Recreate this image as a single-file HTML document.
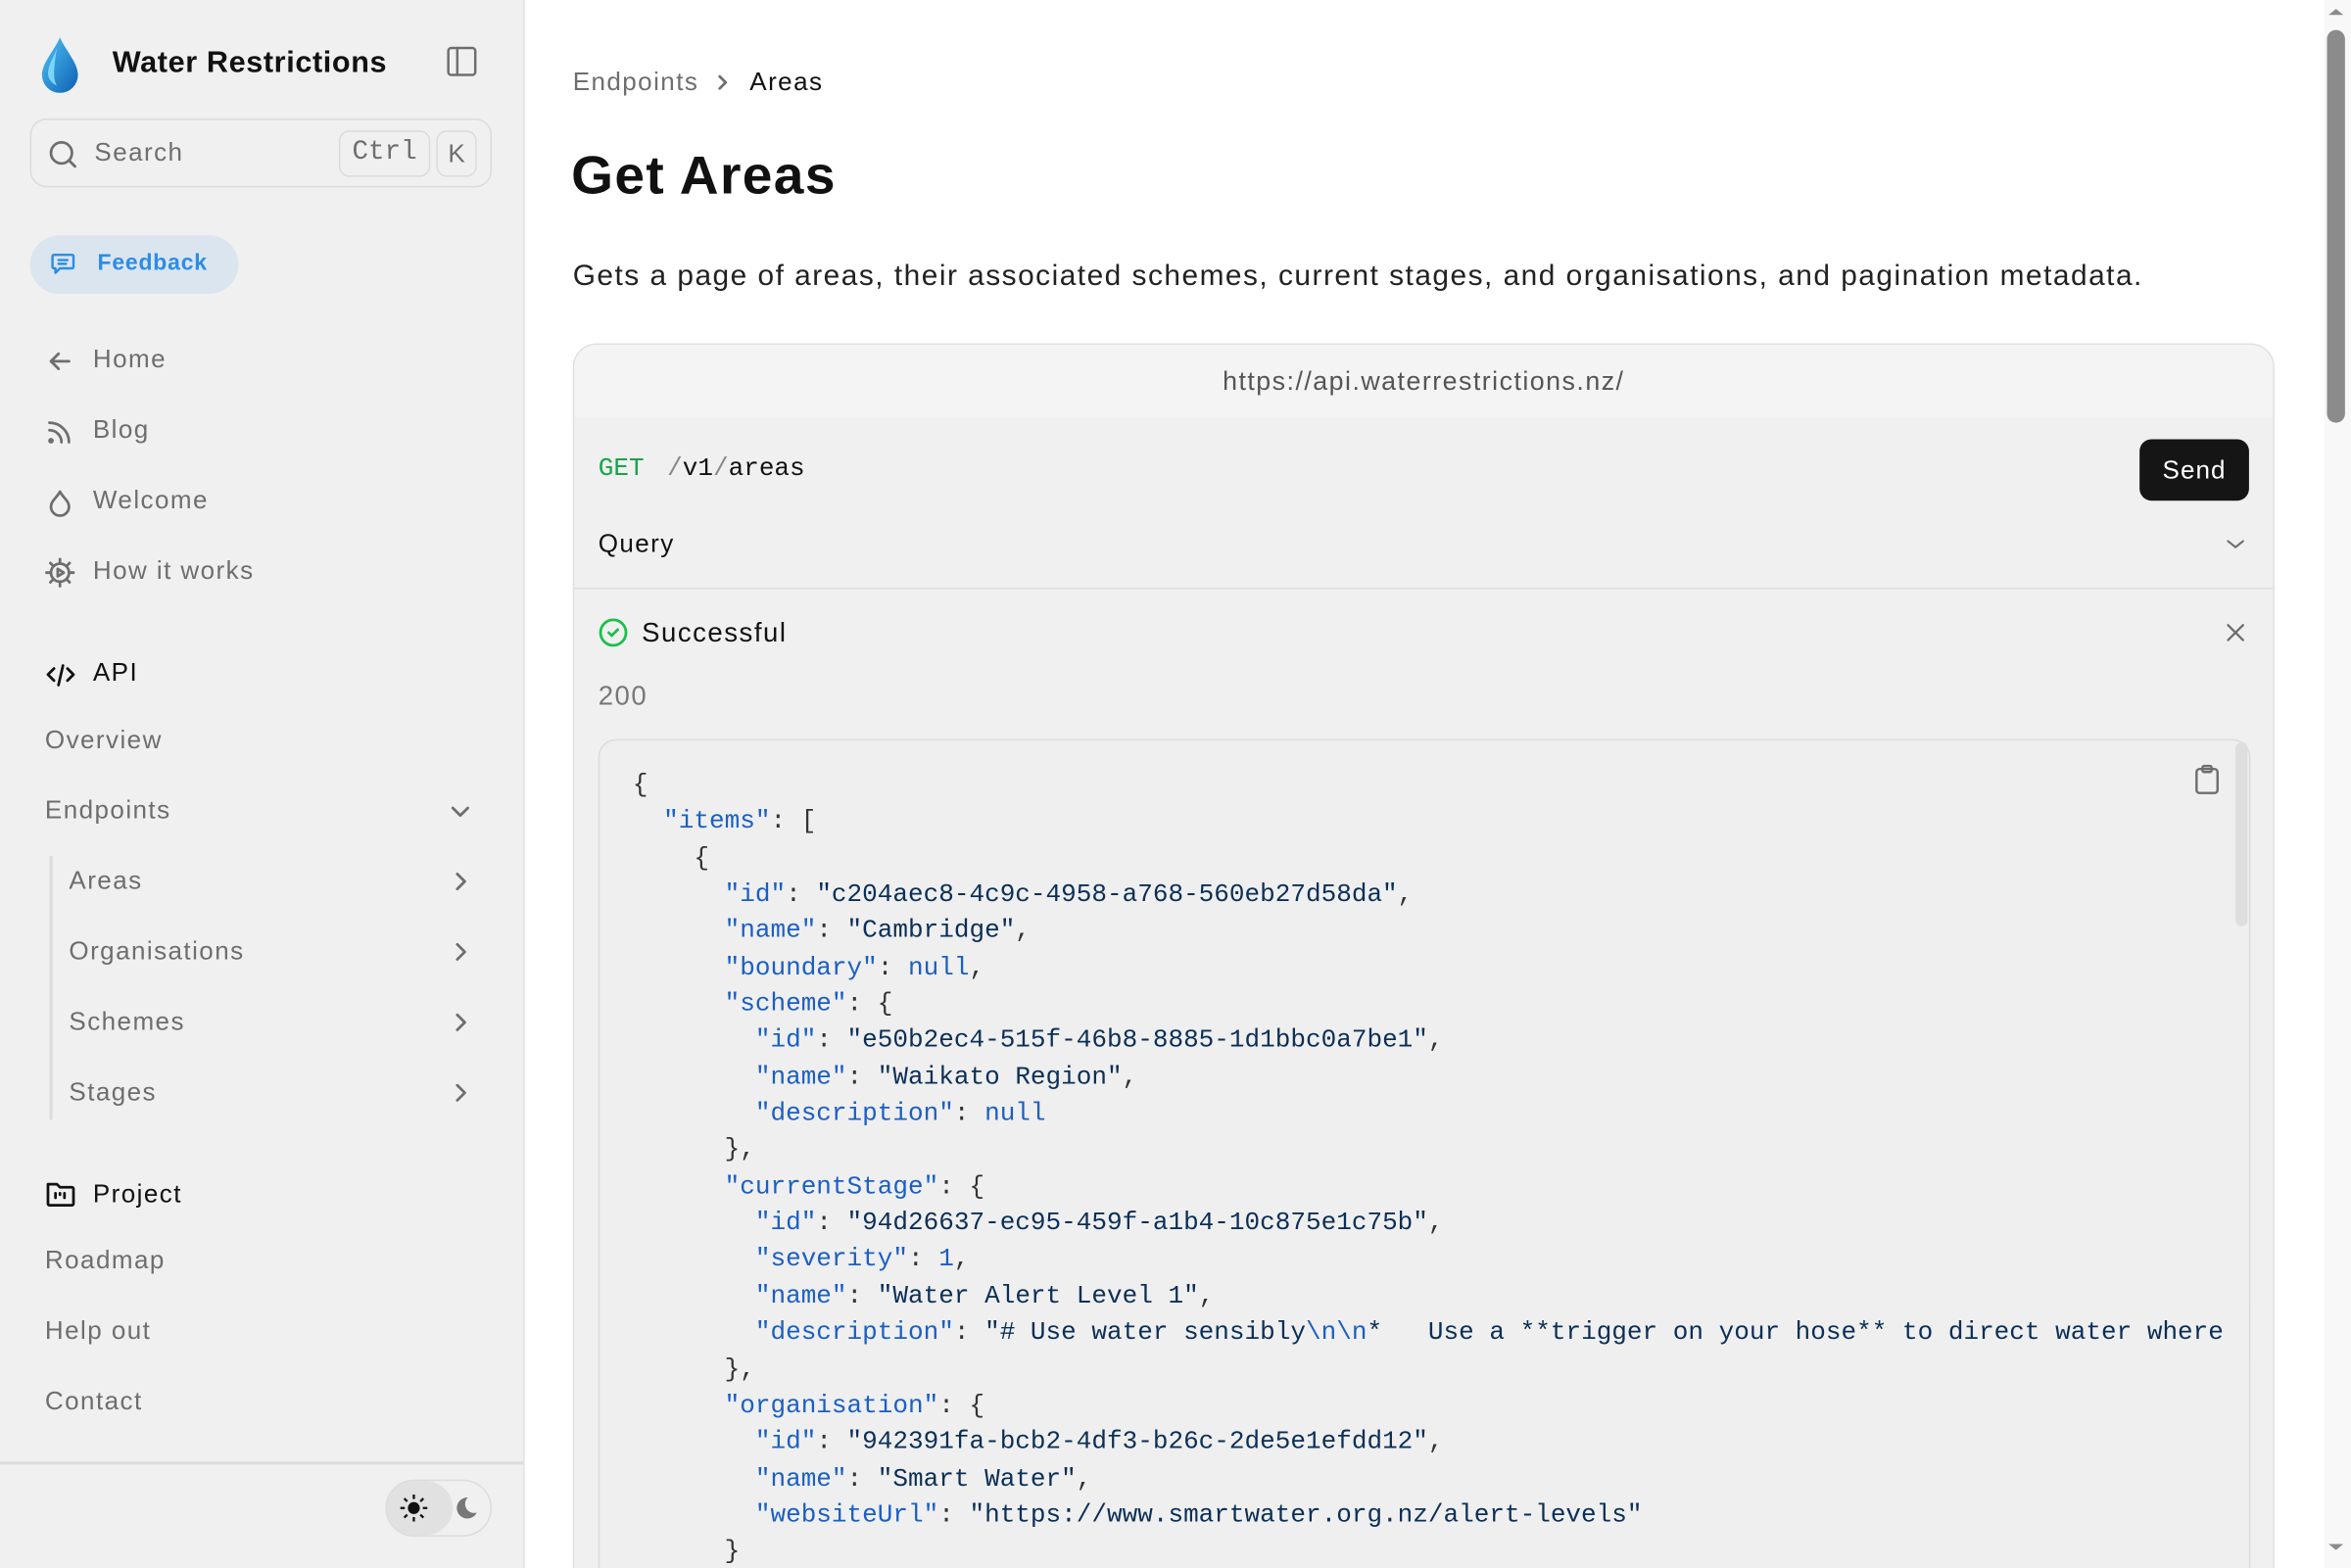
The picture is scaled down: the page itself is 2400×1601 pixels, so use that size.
<!DOCTYPE html>
<html><head><meta charset="utf-8"><style>
*{box-sizing:border-box;margin:0;padding:0}
html,body{width:2400px;height:1600px;overflow:hidden;background:#fff}
#w{position:absolute;left:0;top:0;width:1568px;height:1046px;overflow:hidden;transform:scale(1.5306);transform-origin:0 0;background:#fff;font-family:"Liberation Sans",sans-serif;color:#111}
.sb{position:absolute;left:0;top:0;width:350px;height:1046px;background:#f0f0f0;border-right:1px solid #e3e3e3}
.abs{position:absolute}
.t{position:absolute;font-size:17px;line-height:20px;color:#6e6e6e;white-space:nowrap;letter-spacing:.055em}
.ic{position:absolute;fill:none;stroke:#6e6e6e;stroke-width:1.8;stroke-linecap:round;stroke-linejoin:round}
pre{position:absolute;left:422px;top:513px;font-family:"Liberation Mono",monospace;font-size:17px;line-height:24.35px;color:#333}
.k{color:#1a5fc4}.s{color:#0b2f57}.n{color:#1a5fc4}
</style></head><body><div id="w">
<div class="sb">
 <svg class="abs" style="left:26px;top:24px" width="28" height="38" viewBox="0 0 28 38"><defs><linearGradient id="g" x1="0" y1="0" x2="1" y2="1"><stop offset="0" stop-color="#4fc3f7"/><stop offset="1" stop-color="#0d5fb0"/></linearGradient></defs><path d="M14 1C10 10 2 18 2 26a12 12 0 0 0 24 0C26 18 18 10 14 1z" fill="url(#g)"/><path d="M12 8C10 14 6 19 6 25c0 4 3 7 6 8-2-3-3-8 0-25z" fill="#8fe4ff" opacity=".8"/></svg>
 <div class="t" style="left:75px;top:30px;font-size:20px;line-height:24px;color:#111;font-weight:600;letter-spacing:.02em">Water Restrictions</div>
 <svg class="ic" style="left:297px;top:30px;stroke-width:1.6" width="22" height="22" viewBox="0 0 22 22"><rect x="2" y="2" width="18" height="18" rx="2"/><line x1="8" y1="2" x2="8" y2="20"/></svg>
 <div class="abs" style="left:20px;top:79px;width:308px;height:46px;border:1px solid #dcdcdc;border-radius:11px"></div>
 <svg class="ic" style="left:31px;top:92px" width="22" height="22" viewBox="0 0 22 22"><circle cx="10" cy="10" r="7"/><line x1="15" y1="15" x2="19" y2="19"/></svg>
 <div class="t" style="left:63px;top:92px">Search</div>
 <div class="abs" style="left:226px;top:87px;width:61px;height:31px;border:1px solid #dcdcdc;border-radius:7px;font-family:'Liberation Mono',monospace;font-size:18px;color:#6e6e6e;text-align:center;line-height:29px">Ctrl</div>
 <div class="abs" style="left:291px;top:87px;width:27px;height:31px;border:1px solid #dcdcdc;border-radius:7px;font-size:17px;color:#6e6e6e;text-align:center;line-height:29px">K</div>
 <div class="abs" style="left:20px;top:157px;width:139px;height:39px;border-radius:20px;background:#dbe5ef"></div>
 <svg class="ic" style="left:33px;top:167px;stroke:#2b8de6;stroke-width:1.6" width="18" height="18" viewBox="0 0 18 18"><path d="M3 3h12a1 1 0 0 1 1 1v7a1 1 0 0 1-1 1H7l-3 3v-3H3a1 1 0 0 1-1-1V4a1 1 0 0 1 1-1z"/><line x1="6" y1="6.5" x2="12" y2="6.5"/><line x1="6" y1="9" x2="11" y2="9"/></svg>
 <div class="t" style="left:65px;top:166px;font-size:15px;color:#2b8de6;font-weight:700;letter-spacing:.035em">Feedback</div>
 <svg class="ic" style="left:30px;top:231px" width="20" height="20" viewBox="0 0 20 20"><path d="M16 10H4M9 5l-5 5 5 5"/></svg>
 <div class="t" style="left:62px;top:230px">Home</div>
 <svg class="ic" style="left:30px;top:278px" width="20" height="20" viewBox="0 0 20 20"><path d="M3 4a13 13 0 0 1 13 13M3 9a8 8 0 0 1 8 8"/><circle cx="4" cy="16" r="1" fill="#6e6e6e"/></svg>
 <div class="t" style="left:62px;top:277px">Blog</div>
 <svg class="ic" style="left:30px;top:325px" width="20" height="20" viewBox="0 0 20 20"><path d="M10 3C8 7 4 9 4 13a6 6 0 0 0 12 0c0-4-4-6-6-10z"/></svg>
 <div class="t" style="left:62px;top:324px">Welcome</div>
 <svg class="ic" style="left:30px;top:372px" width="20" height="20" viewBox="0 0 20 20"><circle cx="10" cy="10" r="6"/><path d="M10 1v3M10 16v3M1 10h3M16 10h3M3.6 3.6l2 2M14.4 14.4l2 2M3.6 16.4l2-2M14.4 5.6l2-2M8.5 7.5v5l4-2.5z"/></svg>
 <div class="t" style="left:62px;top:371px">How it works</div>
 <svg class="ic" style="left:30px;top:440px;stroke:#111" width="21" height="20" viewBox="0 0 21 20"><path d="M6 6l-4 4 4 4M15 6l4 4-4 4M12 4l-3 13"/></svg>
 <div class="t" style="left:62px;top:439px;color:#111">API</div>
 <div class="t" style="left:30px;top:484px">Overview</div>
 <div class="t" style="left:30px;top:531px">Endpoints</div>
 <svg class="ic" style="left:299px;top:533px" width="16" height="16" viewBox="0 0 16 16"><path d="M3 6l5 5 5-5"/></svg>
 <div class="abs" style="left:33px;top:571px;width:2px;height:176px;background:#dcdcdc"></div>
 <div class="t" style="left:46px;top:578px">Areas</div>
 <div class="t" style="left:46px;top:625px">Organisations</div>
 <div class="t" style="left:46px;top:672px">Schemes</div>
 <div class="t" style="left:46px;top:719px">Stages</div>
 <svg class="ic" style="left:299px;top:580px" width="16" height="16" viewBox="0 0 16 16"><path d="M6 3l5 5-5 5"/></svg>
 <svg class="ic" style="left:299px;top:627px" width="16" height="16" viewBox="0 0 16 16"><path d="M6 3l5 5-5 5"/></svg>
 <svg class="ic" style="left:299px;top:674px" width="16" height="16" viewBox="0 0 16 16"><path d="M6 3l5 5-5 5"/></svg>
 <svg class="ic" style="left:299px;top:721px" width="16" height="16" viewBox="0 0 16 16"><path d="M6 3l5 5-5 5"/></svg>
 <svg class="ic" style="left:30px;top:787px;stroke:#111" width="21" height="20" viewBox="0 0 21 20"><path d="M2 3h6l2 2h8a1 1 0 0 1 1 1v10a1 1 0 0 1-1 1H3a1 1 0 0 1-1-1z"/><path d="M7 9v3M10 9v1M13 9v3"/></svg>
 <div class="t" style="left:62px;top:787px;color:#111">Project</div>
 <div class="t" style="left:30px;top:831px">Roadmap</div>
 <div class="t" style="left:30px;top:878px">Help out</div>
 <div class="t" style="left:30px;top:925px">Contact</div>
 <div class="abs" style="left:0;top:975px;width:349px;height:2px;background:#dcdcdc"></div>
 <div class="abs" style="left:257px;top:987px;width:71px;height:38px;border:1px solid #dcdcdc;border-radius:19px"></div>
 <div class="abs" style="left:258px;top:988px;width:44px;height:36px;border-radius:18px;background:#e1e1e1"></div>
 <svg class="abs" style="left:266px;top:996px" width="20" height="20" viewBox="0 0 20 20"><circle cx="10" cy="10" r="4" fill="#111"/><path d="M10 1v3M10 16v3M1 10h3M16 10h3M3.6 3.6l2 2M14.4 14.4l2 2M3.6 16.4l2-2M14.4 5.6l2-2" stroke="#111" stroke-width="1.5"/></svg>
 <svg class="abs" style="left:300px;top:996px" width="20" height="20" viewBox="0 0 20 20"><path d="M12 3a7 7 0 1 0 6 10 6 6 0 0 1-6-10z" fill="#777"/></svg>
</div>
<div class="main">
 <div class="t" style="left:382px;top:45px;color:#6e6e6e">Endpoints</div>
 <svg class="ic" style="left:475px;top:48px" width="14" height="14" viewBox="0 0 14 14"><path d="M5 3l4 4-4 4"/></svg>
 <div class="t" style="left:500px;top:45px;color:#111">Areas</div>
 <div class="t" style="left:381px;top:96px;font-size:36px;line-height:42px;font-weight:700;color:#111;letter-spacing:.025em">Get Areas</div>
 <div class="t" style="left:382px;top:173px;font-size:19.5px;line-height:22px;color:#222;letter-spacing:.05em">Gets a page of areas, their associated schemes, current stages, and organisations, and pagination metadata.</div>
 <div class="abs" style="left:382px;top:229px;width:1135px;height:840px;border:1px solid #e0e0e0;border-radius:16px;background:#f0f0f0;overflow:hidden">
  <div class="abs" style="left:0;top:0;width:100%;height:48px;background:#f4f4f4"></div>
  <div class="abs" style="left:0;top:162px;width:100%;height:1px;background:#dcdcdc"></div>
 </div>
 <div class="t" style="left:382px;top:244px;width:1135px;text-align:center;color:#555;font-size:17.5px">https://api.waterrestrictions.nz/</div>
 <div class="t" style="left:399px;top:304px;font-family:'Liberation Mono',monospace;font-size:17px;color:#1aa34a;letter-spacing:0">GET</div>
 <div class="t" style="left:445px;top:304px;font-family:'Liberation Mono',monospace;font-size:17px;color:#111;letter-spacing:0"><span style="color:#888">/</span>v1<span style="color:#888">/</span>areas</div>
 <div class="abs" style="left:1427px;top:293px;width:73px;height:41px;background:#151515;border-radius:8px;color:#fff;font-size:17px;text-align:center;line-height:41px;letter-spacing:.04em">Send</div>
 <div class="t" style="left:399px;top:353px;color:#111">Query</div>
 <svg class="ic" style="left:1483px;top:355px;stroke-width:1.4" width="16" height="16" viewBox="0 0 16 16"><path d="M3 6l5 4 5-4"/></svg>
 <svg class="abs" style="left:399px;top:412px" width="20" height="20" viewBox="0 0 20 20"><circle cx="10" cy="10" r="8.5" fill="none" stroke="#1bbf4a" stroke-width="1.8"/><path d="M7 10l2 2 4-4" fill="none" stroke="#1bbf4a" stroke-width="1.8" stroke-linecap="round"/></svg>
 <div class="t" style="left:428px;top:412px;font-size:18px;color:#111">Successful</div>
 <svg class="ic" style="left:1483px;top:414px;stroke-width:1.5" width="16" height="16" viewBox="0 0 16 16"><path d="M3 3l10 10M13 3L3 13"/></svg>
 <div class="t" style="left:399px;top:454px;font-size:18px;color:#777">200</div>
 <div class="abs" style="left:399px;top:493px;width:1102px;height:600px;border:1px solid #dcdcdc;border-radius:12px;background:#efefef"></div>
 <div class="abs" style="left:1491px;top:495px;width:8px;height:123px;background:#dedede;border-radius:4px"></div>
 <svg class="ic" style="left:1462px;top:509px;stroke-width:1.6" width="20" height="22" viewBox="0 0 20 22"><rect x="3" y="4" width="14" height="16" rx="2"/><rect x="7" y="2" width="6" height="4" rx="1"/></svg>
<pre>{
  <span class="k">"items"</span>: [
    {
      <span class="k">"id"</span>: <span class="s">"c204aec8-4c9c-4958-a768-560eb27d58da"</span>,
      <span class="k">"name"</span>: <span class="s">"Cambridge"</span>,
      <span class="k">"boundary"</span>: <span class="n">null</span>,
      <span class="k">"scheme"</span>: {
        <span class="k">"id"</span>: <span class="s">"e50b2ec4-515f-46b8-8885-1d1bbc0a7be1"</span>,
        <span class="k">"name"</span>: <span class="s">"Waikato Region"</span>,
        <span class="k">"description"</span>: <span class="n">null</span>
      },
      <span class="k">"currentStage"</span>: {
        <span class="k">"id"</span>: <span class="s">"94d26637-ec95-459f-a1b4-10c875e1c75b"</span>,
        <span class="k">"severity"</span>: <span class="n">1</span>,
        <span class="k">"name"</span>: <span class="s">"Water Alert Level 1"</span>,
        <span class="k">"description"</span>: <span class="s">"# Use water sensibly<span class="k">\n\n</span>*   Use a **trigger on your hose** to direct water where</span>
      },
      <span class="k">"organisation"</span>: {
        <span class="k">"id"</span>: <span class="s">"942391fa-bcb2-4df3-b26c-2de5e1efdd12"</span>,
        <span class="k">"name"</span>: <span class="s">"Smart Water"</span>,
        <span class="k">"websiteUrl"</span>: <span class="s">"https://www.smartwater.org.nz/alert-levels"</span>
      }
</pre>
 <div class="abs" style="left:1490px;top:870px;width:10px;height:40px;background:#efefef"></div>
</div>
<div class="abs" style="left:1550px;top:0;width:18px;height:1046px;background:#f8f8f8"></div>
<div class="abs" style="left:1552px;top:20px;width:12px;height:262px;background:#8b8b8b;border-radius:6px"></div>
<svg class="abs" style="left:1552px;top:4px" width="12" height="8"><path d="M1 6l5-4 5 4z" fill="#8b8b8b"/></svg>
<svg class="abs" style="left:1552px;top:1028px" width="12" height="8"><path d="M1 2l5 4 5-4z" fill="#8b8b8b"/></svg>
</div></body></html>
